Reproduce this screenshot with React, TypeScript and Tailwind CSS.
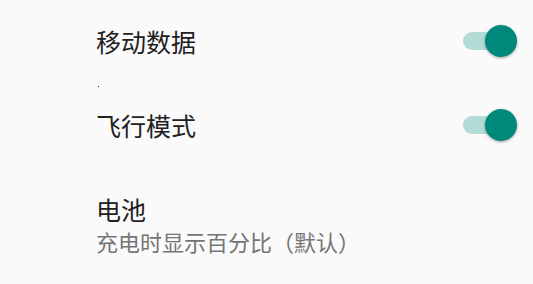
const ROWS = [
  { title: '移动数据', on: true },
  { title: '飞行模式', on: true },
]

function Toggle({ on }: { on: boolean }) {
  return (
    <div className="relative w-[54px] h-[32px] flex items-center">
      <div className={`w-[46px] h-[18px] rounded-full ${on ? 'bg-[#b4dcd7]' : 'bg-[#bdbdbd]'}`} />
      <div
        className={`absolute top-0 w-[32px] h-[32px] rounded-full shadow-[0_1px_3px_rgba(0,0,0,0.35)] ${
          on ? 'left-[22px] bg-[#00897b]' : 'left-0 bg-[#f1f1f1]'
        }`}
      />
    </div>
  )
}

export default function App() {
  return (
    <div
      className="w-[533px] h-[284px] bg-[#fafafa] overflow-hidden"
      style={{ fontFamily: '"Noto Sans CJK SC", "Noto Sans", sans-serif' }}
    >
      {ROWS.map((row, i) => (
        <div
          key={row.title}
          className={`relative flex items-center justify-between pl-[96px] pr-[16px] ${i === 0 ? 'h-[82px]' : 'h-[86px]'}`}
        >
          <span className="text-[25px] leading-none text-[#212121]">{row.title}</span>
          <Toggle on={row.on} />
          {i === 0 && <span className="absolute left-[98px] bottom-[-5px] w-px h-px bg-[#1a237e]" />}
        </div>
      ))}

      <div className="pl-[96px] pt-[27px] flex flex-col">
        <span className="text-[25px] leading-[29px] text-[#212121]">电池</span>
        <span className="mt-[3px] text-[22px] leading-[28px] text-[#757575]">充电时显示百分比（默认）</span>
      </div>
    </div>
  )
}
